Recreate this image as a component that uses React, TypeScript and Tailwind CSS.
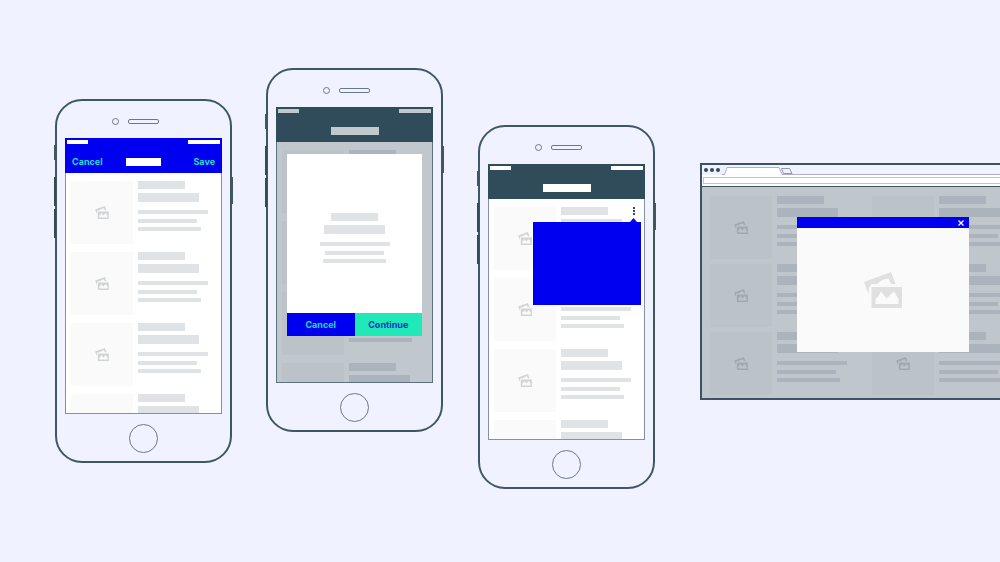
import type { ReactNode } from "react";

function PhotosIcon({ className }: { className: string }) {
  return (
    <svg viewBox="0 0 38 36" className={className} fill="currentColor" aria-hidden="true">
      <path d="M0 10 27 0 31.5 12H27L24.5 6.5 19 7.5 13 12H7.5L5 16 4.5 22Z" />
      <path fillRule="evenodd" d="M7.5 15H38V36H7.5ZM11.5 32H34.5V27L30 19.5 26 23 22.5 26.5 17 19.5 14.500 24 11.5 27Z" />
    </svg>
  );
}

type Tone = "light" | "dimmed";

function TextLines({ tone, centered = false }: { tone: Tone; centered?: boolean }) {
  const bar = tone === "light" ? "bg-[#e0e3e6]" : "bg-[#abb4bc]";
  return (
    <div className={`flex flex-col ${centered ? "items-center" : "items-start"}`}>
      <div className={`h-2 w-[47px] ${bar}`} />
      <div className={`mt-1 h-[9px] w-[61px] ${bar}`} />
      <div className={`mt-2 h-1 w-[70px] ${bar}`} />
      <div className={`mt-[5px] h-1 w-[59px] ${bar}`} />
      <div className={`mt-1 h-1 w-[63px] ${bar}`} />
    </div>
  );
}

function Item({ tone }: { tone: Tone }) {
  const tile =
    tone === "light" ? "bg-[#fafafa] text-[#d2d3d4]" : "bg-[#bbc3c9] text-[#a1a9b0]";
  return (
    <div className="flex gap-[5px]">
      <div className={`flex h-[63px] w-[62px] shrink-0 items-center justify-center ${tile}`}>
        <PhotosIcon className="h-[13px] w-[14px]" />
      </div>
      <TextLines tone={tone} />
    </div>
  );
}

type PhoneProps = {
  className: string;
  headerClass: string;
  barClass: string;
  bodyClass: string;
  tone: Tone;
  title: ReactNode;
  children?: ReactNode;
};

function Phone({ className, headerClass, barClass, bodyClass, tone, title, children }: PhoneProps) {
  return (
    <section
      className={`relative w-[177px] shrink-0 rounded-[27px] border-2 border-[#3f5765] px-2 pb-2 ${className}`}
    >
      <span className="absolute top-11 -left-[3px] h-[15px] w-0.5 bg-[#3f5765]" />
      <span className="absolute top-[76px] -left-[3px] h-[29px] w-0.5 bg-[#304c5b]" />
      <span className="absolute top-[108px] -left-[3px] h-[29px] w-0.5 bg-[#304c5b]" />
      <span className="absolute top-[76px] -right-[3px] h-[27px] w-0.5 bg-[#3f5765]" />
      <div className="flex h-[37px] items-center gap-[9px] pt-1 pl-[47px]">
        <span className="size-[7px] rounded-full border border-[#6b7791]" />
        <span className="h-[5px] w-[31px] rounded-xs border border-[#6b7791]" />
      </div>
      <div className="relative">
        <header className={`h-[35px] pt-0.5 ${headerClass}`}>
          <div className="flex justify-between px-0.5">
            <span className={`h-1 w-[21px] ${barClass}`} />
            <span className={`h-1 w-8 ${barClass}`} />
          </div>
          <div className="mt-2.5 flex h-4 items-center justify-center">{title}</div>
        </header>
        <div
          className={`flex h-[241px] flex-col gap-2 overflow-hidden border-x border-b pt-2 pl-[5px] ${bodyClass}`}
        >
          {[0, 1, 2, 3].map((row) => (
            <Item key={row} tone={tone} />
          ))}
        </div>
        {children}
      </div>
      <div className="mx-auto mt-[10px] size-[29px] rounded-full border border-[#6b7791]" />
    </section>
  );
}

function Browser() {
  return (
    <section className="mt-[163px] ml-[45px] w-[366px] shrink-0 border-2 border-[#3b5362]">
      <div className="flex h-[10px] items-end bg-[#f1f2ff]">
        <div className="mb-[3px] ml-0.5 flex gap-0.5">
          <span className="size-1 rounded-full bg-[#304c5b]" />
          <span className="size-1 rounded-full bg-[#304c5b]" />
          <span className="size-1 rounded-full bg-[#304c5b]" />
        </div>
        <svg viewBox="0 0 342 10" className="ml-0.5 h-[10px] w-[342px]" fill="none" aria-hidden="true">
          <path d="M2 9.5H2.500L5 2.500H57L60 9.500" fill="#fff" stroke="#aeb0c6" />
          <path d="M0 9.500H3M60 9.500H342" stroke="#aeb0c6" />
          <path d="M59.500 3.500H67.500L70 8.500H61.500Z" stroke="#9496b2" />
        </svg>
      </div>
      <div className="flex h-[11px] flex-col bg-white px-px pt-0.5">
        <input
          aria-label="Address"
          className="h-[7px] w-full border border-[#c3c4cc] bg-white text-[4px] outline-none"
        />
      </div>
      <div className="relative border-t border-[#3b5362] bg-[#c0c7cc] pt-[9px] pb-[3px] pl-2">
        <div className="grid grid-cols-[162px_162px] gap-y-[5px]">
          {[0, 1, 2, 3, 4, 5].map((cell) => (
            <Item key={cell} tone="dimmed" />
          ))}
        </div>
        <div className="absolute inset-0 flex items-start justify-center pt-[30px]">
          <div role="dialog" aria-label="Image" className="w-[172px]">
            <div className="flex h-[11px] items-center justify-end bg-[#0000f0] pr-[5px]">
              <button type="button" aria-label="Close" className="text-white">
                <svg viewBox="0 0 6 6" className="size-1.5" stroke="currentColor" strokeWidth="1.300">
                  <path d="M.5.5 5.500 5.500M5.500.5.5 5.500" />
                </svg>
              </button>
            </div>
            <div className="flex h-[124px] items-center justify-center bg-[#fafafa] text-[#e0e0e0]">
              <PhotosIcon className="h-9 w-[38px]" />
            </div>
          </div>
        </div>
      </div>
    </section>
  );
}

export default function App() {
  return (
    <main className="flex min-h-screen items-start overflow-hidden bg-[#f1f2ff] pl-[55px] font-['Inter',sans-serif] text-[9px] leading-4 font-bold">
      <Phone
        className="mt-[99px]"
        headerClass="bg-[#0000f0]"
        barClass="bg-white"
        bodyClass="border-[#8590a6] bg-white"
        tone="light"
        title={
          <div className="grid w-full grid-cols-3 items-center px-[7px] text-[#22dccb]">
            <button type="button" className="text-left">Cancel</button>
            <span className="h-2 w-[35px] justify-self-center bg-white" />
            <button type="button" className="text-right">Save</button>
          </div>
        }
      />
      <Phone
        className="mt-[68px] ml-[34px]"
        headerClass="bg-[#304c5b]"
        barClass="bg-[#c1c8ce]"
        bodyClass="border-[#5e7180] bg-[#c1c8cd]"
        tone="dimmed"
        title={<span className="h-2 w-12 bg-[#c1c8ce]" />}
      >
        <div
          role="dialog"
          aria-label="Confirmation"
          className="absolute inset-x-[11px] top-[47px] bg-white"
        >
          <div className="flex h-[159px] justify-center pt-[59px]">
            <TextLines tone="light" centered />
          </div>
          <div className="grid h-[23px] grid-cols-2">
            <button type="button" className="bg-[#0000f0] text-[#22dccb]">Cancel</button>
            <button type="button" className="bg-[#1fe9b6] text-[#0b32c8]">Continue</button>
          </div>
        </div>
      </Phone>
      <Phone
        className="mt-[125px] ml-[35px]"
        headerClass="bg-[#304c5b]"
        barClass="bg-white"
        bodyClass="border-[#8590a6] bg-white"
        tone="light"
        title={<span className="h-2 w-12 bg-white" />}
      >
        <div className="absolute top-[43px] right-1 flex w-[108px] flex-col items-end">
          <button
            type="button"
            aria-label="More options"
            className="mr-1.5 flex h-[10px] w-[3px] flex-col items-center gap-px"
          >
            <span className="size-0.5 bg-[#304c5b]" />
            <span className="size-0.5 bg-[#304c5b]" />
            <span className="size-0.5 bg-[#304c5b]" />
          </button>
          <svg viewBox="0 0 7 4" className="mt-px mr-1 h-1 w-[7px]" fill="#0000f0" aria-hidden="true">
            <path d="M0 4 3.500 0 7 4Z" />
          </svg>
          <div role="menu" className="h-[83px] w-full bg-[#0000f0]" />
        </div>
      </Phone>
      <Browser />
    </main>
  );
}
